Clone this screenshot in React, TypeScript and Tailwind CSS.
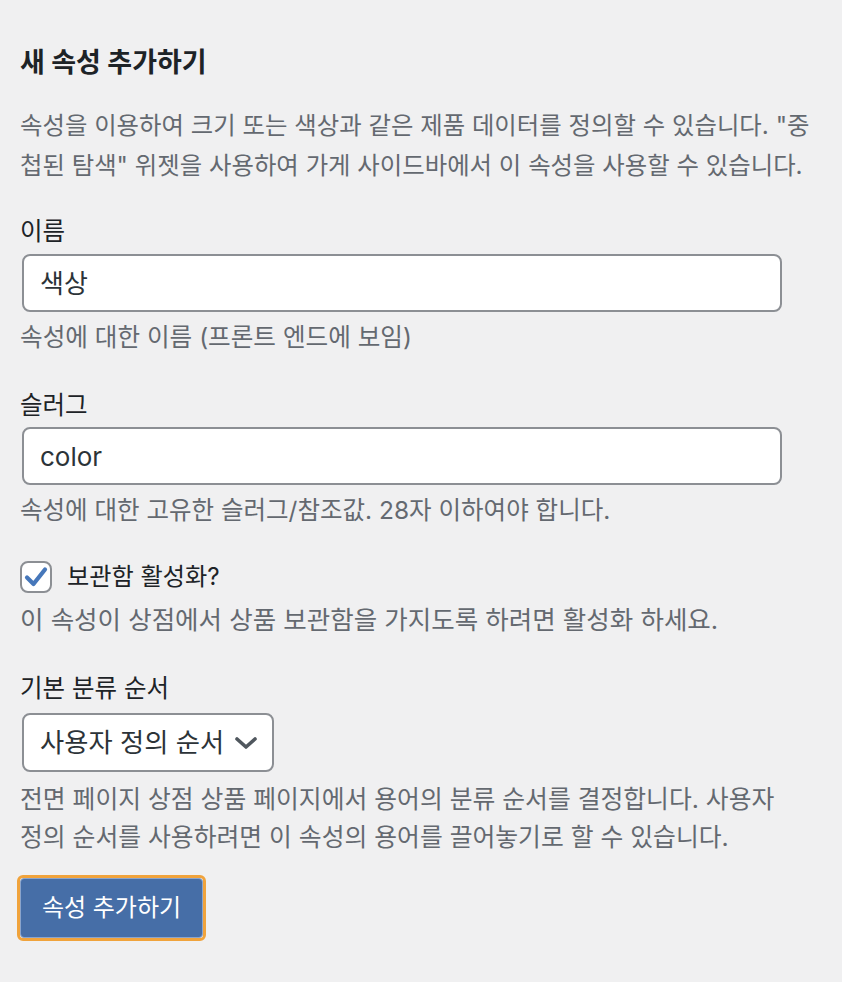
import React from "react";

export default function App() {
  return (
    <div className="min-h-[982px] w-[842px] bg-[#f0f0f1] pl-[20px] pt-[47px] font-['Inter','Noto_Sans_CJK_KR',sans-serif] text-[#1d2327]">
      <h2 className="text-[27px] font-bold leading-[32px] text-[#1d2327]">새 속성 추가하기</h2>
      <p className="mt-[26px] whitespace-nowrap text-[24.4px] leading-[40px] text-[#646970]">
        속성을 이용하여 크기 또는 색상과 같은 제품 데이터를 정의할 수 있습니다. "중
        <br />
        첩된 탐색" 위젯을 사용하여 가게 사이드바에서 이 속성을 사용할 수 있습니다.
      </p>

      <label className="mt-[30px] block text-[24.5px] leading-[32px]">이름</label>
      <div className="ml-[2px] mt-[7px] flex h-[58px] w-[760px] items-center rounded-[8px] border-2 border-[#8c8f94] bg-white pl-[16px] text-[26px] text-[#2c3338]">
        색상
      </div>
      <p className="mt-[5px] text-[24.6px] leading-[40px] text-[#646970]">속성에 대한 이름 (프론트 엔드에 보임)</p>

      <label className="mt-[32px] block text-[24.5px] leading-[32px]">슬러그</label>
      <div className="ml-[2px] mt-[6px] flex h-[58px] w-[760px] items-center rounded-[8px] border-2 border-[#8c8f94] bg-white pl-[16px] text-[26px] text-[#2c3338]">
        color
      </div>
      <p className="mt-[5px] text-[24.5px] leading-[40px] text-[#646970]">속성에 대한 고유한 슬러그/참조값. 28자 이하여야 합니다.</p>

      <div className="mt-[31px] flex h-[32px] items-center">
        <div className="flex h-[32px] w-[32px] items-center justify-center rounded-[8px] border-2 border-[#8c8f94] bg-white">
          <svg width="24" height="22" viewBox="0 0 24 22">
            <polyline points="3,11.5 9.5,18 21,3.5" fill="none" stroke="#4677ba" strokeWidth="4.2" strokeLinecap="round" strokeLinejoin="round" />
          </svg>
        </div>
        <span className="ml-[15px] text-[24.2px] leading-[32px]">보관함 활성화?</span>
      </div>
      <p className="mt-[7px] whitespace-nowrap text-[25.5px] leading-[40px] text-[#646970]">이 속성이 상점에서 상품 보관함을 가지도록 하려면 활성화 하세요.</p>

      <label className="mt-[32px] block text-[24.5px] leading-[32px]">기본 분류 순서</label>
      <div className="ml-[2px] mt-[9px] flex h-[59px] w-[252px] items-center rounded-[8px] border-2 border-[#8c8f94] bg-white pl-[16px] text-[26.3px] text-[#2c3338]">
        <span>사용자 정의 순서</span>
        <svg className="ml-[10px]" width="24" height="14" viewBox="0 0 24 14">
          <polyline points="3,3 12,11 21,3" fill="none" stroke="#50575e" strokeWidth="3.6" strokeLinecap="round" strokeLinejoin="round" />
        </svg>
      </div>
      <p className="mt-[8px] whitespace-nowrap text-[24.8px] leading-[38px] text-[#646970]">
        전면 페이지 상점 상품 페이지에서 용어의 분류 순서를 결정합니다. 사용자
        <br />
        정의 순서를 사용하려면 이 속성의 용어를 끌어놓기로 할 수 있습니다.
      </p>

      <div className="-ml-[3px] mt-[19px] inline-flex rounded-[6px] border-[3px] border-[#f0a33c]">
        <button className="flex h-[60px] w-[183px] items-center justify-center rounded-[4px] border border-[#8aa4cc] bg-[#466ea7] text-[24px] text-white">
          속성 추가하기
        </button>
      </div>
    </div>
  );
}
